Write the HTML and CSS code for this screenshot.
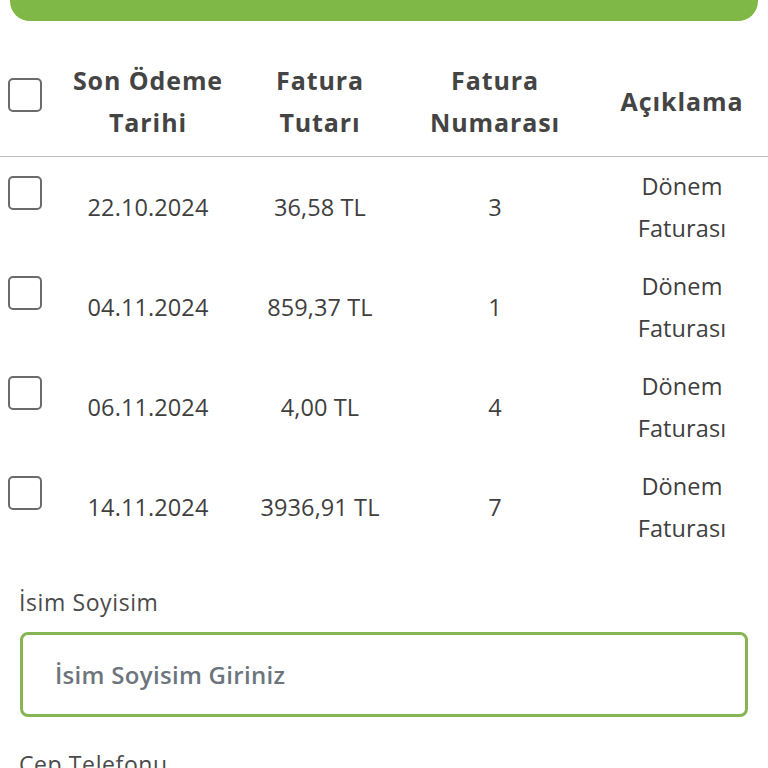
FILE: index.html
```html
<!DOCTYPE html>
<html lang="tr">
<head>
<meta charset="utf-8">
<link rel="stylesheet" href="styles.css">
</head>
<body>
<div class="topbar"></div>
<div class="table">
  <div class="row head">
    <div class="cell chk"><span class="box"></span></div>
    <div class="cell">Son Ödeme<br>Tarihi</div>
    <div class="cell">Fatura<br>Tutarı</div>
    <div class="cell">Fatura<br>Numarası</div>
    <div class="cell">Açıklama</div>
  </div>
  <div class="row body">
    <div class="cell chk"><span class="box"></span></div>
    <div class="cell">22.10.2024</div>
    <div class="cell">36,58 TL</div>
    <div class="cell">3</div>
    <div class="cell">Dönem<br>Faturası</div>
  </div>
  <div class="row body">
    <div class="cell chk"><span class="box"></span></div>
    <div class="cell">04.11.2024</div>
    <div class="cell">859,37 TL</div>
    <div class="cell">1</div>
    <div class="cell">Dönem<br>Faturası</div>
  </div>
  <div class="row body">
    <div class="cell chk"><span class="box"></span></div>
    <div class="cell">06.11.2024</div>
    <div class="cell">4,00 TL</div>
    <div class="cell">4</div>
    <div class="cell">Dönem<br>Faturası</div>
  </div>
  <div class="row body">
    <div class="cell chk"><span class="box"></span></div>
    <div class="cell">14.11.2024</div>
    <div class="cell">3936,91 TL</div>
    <div class="cell">7</div>
    <div class="cell">Dönem<br>Faturası</div>
  </div>
</div>
<div class="form">
  <label class="label">İsim Soyisim</label>
  <div class="input">İsim Soyisim Giriniz</div>
  <label class="label next">Cep Telefonu</label>
</div>
</body>
</html>
```
FILE: styles.css
```css
html, body {
  margin: 0;
  padding: 0;
  background: #fff;
  width: 768px;
  overflow: hidden;
}
body {
  font-family: "Open Sans", "Liberation Sans", sans-serif;
  color: #444;
}
.topbar {
  height: 21px;
  margin: 0 10px;
  background: #80b848;
  border-radius: 0 0 20px 20px;
}
.table {
  margin-top: 25px;
}
.row {
  display: grid;
  grid-template-columns: 50px 196px 148px 202px 172px;
  align-items: center;
}
.row.head {
  height: 110px;
  border-bottom: 1px solid #bdbdbd;
  font-weight: 700;
  font-size: 25px;
  letter-spacing: 0.9px;
  line-height: 42px;
  color: #444;
}
.row.body {
  height: 100px;
  font-size: 23.5px;
  letter-spacing: 0.1px;
  line-height: 42px;
  color: #3f3f3f;
}
.cell {
  text-align: center;
  white-space: nowrap;
}
.cell.chk {
  align-self: start;
  text-align: left;
  padding-left: 8px;
}
.head .cell.chk {
  padding-top: 32px;
}
.body .cell.chk {
  padding-top: 19px;
}
.box {
  display: block;
  width: 30px;
  height: 30px;
  border: 2px solid #6b6b6b;
  border-radius: 5px;
}
.form {
  padding: 0 20px;
  margin-top: 30px;
}
.label {
  display: block;
  font-size: 23px;
  letter-spacing: 0.6px;
  line-height: 30px;
  color: #4a4a4a;
  margin-left: -1px;
}
.input {
  margin-top: 15px;
  height: 79px;
  border: 3px solid #86b553;
  border-radius: 8px;
  padding-left: 32px;
  display: flex;
  align-items: center;
  font-size: 24px;
  letter-spacing: 0.3px;
  font-weight: 600;
  color: #6c757d;
}
.label.next {
  margin-top: 32px;
}
```
